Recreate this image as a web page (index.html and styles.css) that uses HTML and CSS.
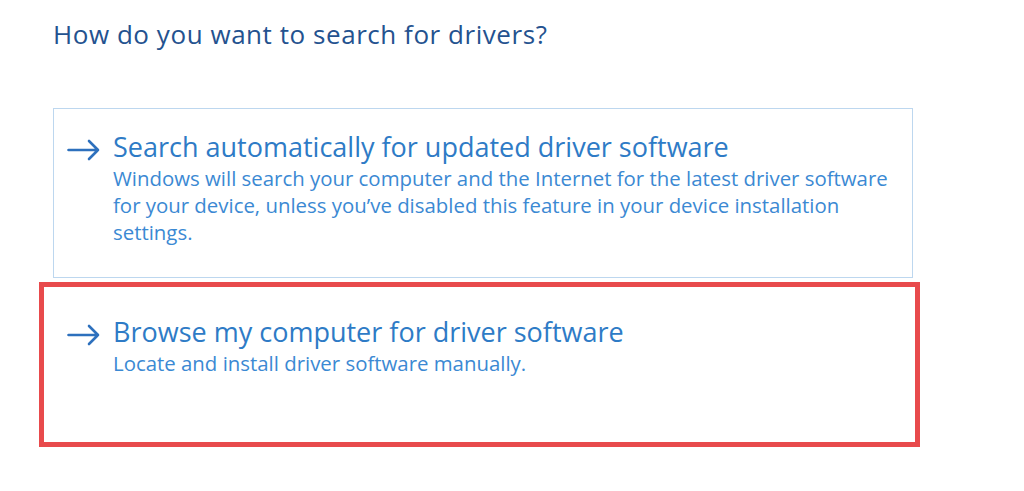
FILE: index.html
```html
<!DOCTYPE html>
<html lang="en">
<head>
<meta charset="utf-8">
<title>Update Drivers</title>
<link rel="stylesheet" href="styles.css">
</head>
<body>
<main class="page">
  <h1 class="heading">How do you want to search for drivers?</h1>
  <div class="options">
    <div class="option">
      <svg class="arrow" width="34" height="22" viewBox="0 0 34 22" aria-hidden="true"><path d="M1.5 11 H31 M22 2 L31 11 L22 20" fill="none" stroke="#2d70bd" stroke-width="2.6" stroke-linecap="round" stroke-linejoin="round"/></svg>
      <div class="text">
        <div class="title">Search automatically for updated driver software</div>
        <div class="desc">Windows will search your computer and the Internet for the latest driver software for your device, unless you’ve disabled this feature in your device installation settings.</div>
      </div>
    </div>
    <div class="option highlight">
      <svg class="arrow" width="34" height="22" viewBox="0 0 34 22" aria-hidden="true"><path d="M1.5 11 H31 M22 2 L31 11 L22 20" fill="none" stroke="#2d70bd" stroke-width="2.6" stroke-linecap="round" stroke-linejoin="round"/></svg>
      <div class="text">
        <div class="title">Browse my computer for driver software</div>
        <div class="desc">Locate and install driver software manually.</div>
      </div>
    </div>
  </div>
</main>
</body>
</html>
```

FILE: styles.css
```css
html, body {
  margin: 0;
  padding: 0;
  background: #ffffff;
}
body {
  font-family: "Open Sans", "Noto Sans", "Liberation Sans", sans-serif;
}
.page {
  padding-top: 18px;
}
.heading {
  margin: 0 0 58px 53px;
  font-size: 26px;
  line-height: 32px;
  font-weight: 400;
  color: #24528f;
  letter-spacing: 0.55px;
}
.options {
  display: flex;
  flex-direction: column;
  gap: 4px;
}
.option {
  box-sizing: border-box;
  margin-left: 53px;
  width: 860px;
  height: 170px;
  border: 1px solid #bdd7ef;
  padding: 22px 20px 0 13px;
  display: flex;
  gap: 12px;
}
.option.highlight {
  margin-left: 39px;
  width: 881px;
  height: 165px;
  border: 5px solid #e84a4c;
  padding: 29px 20px 0 23px;
}
.arrow {
  flex: none;
  margin-top: 8px;
}
.text {
  flex: 1;
}
.title {
  font-size: 27px;
  line-height: 32px;
  color: #2e7bc6;
}
.desc {
  font-size: 20.4px;
  line-height: 27px;
  color: #3b89d3;
  margin-top: 2px;
  max-width: 790px;
}
```
